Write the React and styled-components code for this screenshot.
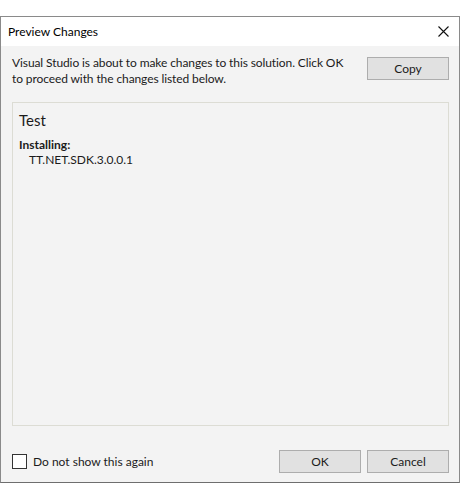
import React, { useState } from 'react';
import styled, { createGlobalStyle } from 'styled-components';

const GlobalStyle = createGlobalStyle`
  html, body {
    margin: 0;
    padding: 0;
    background: #ffffff;
  }
  body {
    font-family: Lato, 'Noto Sans', sans-serif;
    font-size: 12px;
    color: #1b1b1b;
  }
`;

const Page = styled.div`
  width: 461px;
  height: 497px;
  padding-top: 16px;
  box-sizing: border-box;
`;

const Window = styled.div`
  width: 460px;
  height: 467px;
  box-sizing: border-box;
  border: 1px solid #8a8a8a;
  border-bottom-color: #6e6e6e;
  background: #f3f3f3;
  display: flex;
  flex-direction: column;
`;

const TitleBar = styled.div`
  height: 29px;
  background: #ffffff;
  display: flex;
  align-items: center;
  justify-content: space-between;
  padding: 0 0 0 7px;
`;

const TitleText = styled.span`
  font-size: 12px;
  color: #000;
`;

const CloseButton = styled.button`
  width: 30px;
  height: 29px;
  border: none;
  background: transparent;
  display: flex;
  align-items: center;
  justify-content: center;
  padding: 0;
  margin-right: 1px;
`;

const Body = styled.div`
  flex: 1;
  display: flex;
  flex-direction: column;
  padding: 11px 10px 9px 11px;
`;

const Header = styled.div`
  display: flex;
  justify-content: space-between;
  align-items: flex-start;
`;

const Message = styled.p`
  margin: -2px 0 0;
  line-height: 16px;
  width: 345px;
  letter-spacing: -0.1px;
`;

const Button = styled.button`
  width: 82px;
  height: 23px;
  box-sizing: border-box;
  border: 1px solid #adadad;
  background: #e1e1e1;
  font-family: inherit;
  font-size: 12px;
  color: #1b1b1b;
  padding: 0;
`;

const Panel = styled.div`
  margin-top: 15px;
  height: 324px;
  box-sizing: border-box;
  border: 1px solid #dcdcd4;
  padding: 7px 6px;
`;

const ProjectName = styled.div`
  font-size: 15px;
  line-height: 20px;
  margin-bottom: 7px;
`;

const ActionLabel = styled.div`
  font-weight: bold;
  line-height: 15px;
`;

const PackageName = styled.div`
  line-height: 15px;
  padding-left: 10px;
`;

const Footer = styled.div`
  margin-top: auto;
  display: flex;
  align-items: center;
  justify-content: space-between;
`;

const CheckLabel = styled.label`
  display: flex;
  align-items: center;
  gap: 6px;
`;

const CheckBox = styled.span`
  width: 13px;
  height: 13px;
  border: 1px solid #333;
  background: #fff;
  display: inline-block;
`;

const ButtonRow = styled.div`
  display: flex;
  gap: 6px;
`;

export default function App() {
  const [checked, setChecked] = useState(false);
  return (
    <>
      <GlobalStyle />
      <Page>
        <Window>
          <TitleBar>
            <TitleText>Preview Changes</TitleText>
            <CloseButton aria-label="Close">
              <svg width="11" height="11" viewBox="0 0 11 11">
                <path d="M0.5 0.5 L10.5 10.5 M10.5 0.5 L0.5 10.5" stroke="#111" strokeWidth="1.1" />
              </svg>
            </CloseButton>
          </TitleBar>
          <Body>
            <Header>
              <Message>
                Visual Studio is about to make changes to this solution. Click OK to proceed with the changes listed below.
              </Message>
              <Button>Copy</Button>
            </Header>
            <Panel>
              <ProjectName>Test</ProjectName>
              <ActionLabel>Installing:</ActionLabel>
              <PackageName>TT.NET.SDK.3.0.0.1</PackageName>
            </Panel>
            <Footer>
              <CheckLabel onClick={() => setChecked(!checked)}>
                <CheckBox />
                Do not show this again
              </CheckLabel>
              <ButtonRow>
                <Button>OK</Button>
                <Button>Cancel</Button>
              </ButtonRow>
            </Footer>
          </Body>
        </Window>
      </Page>
    </>
  );
}
